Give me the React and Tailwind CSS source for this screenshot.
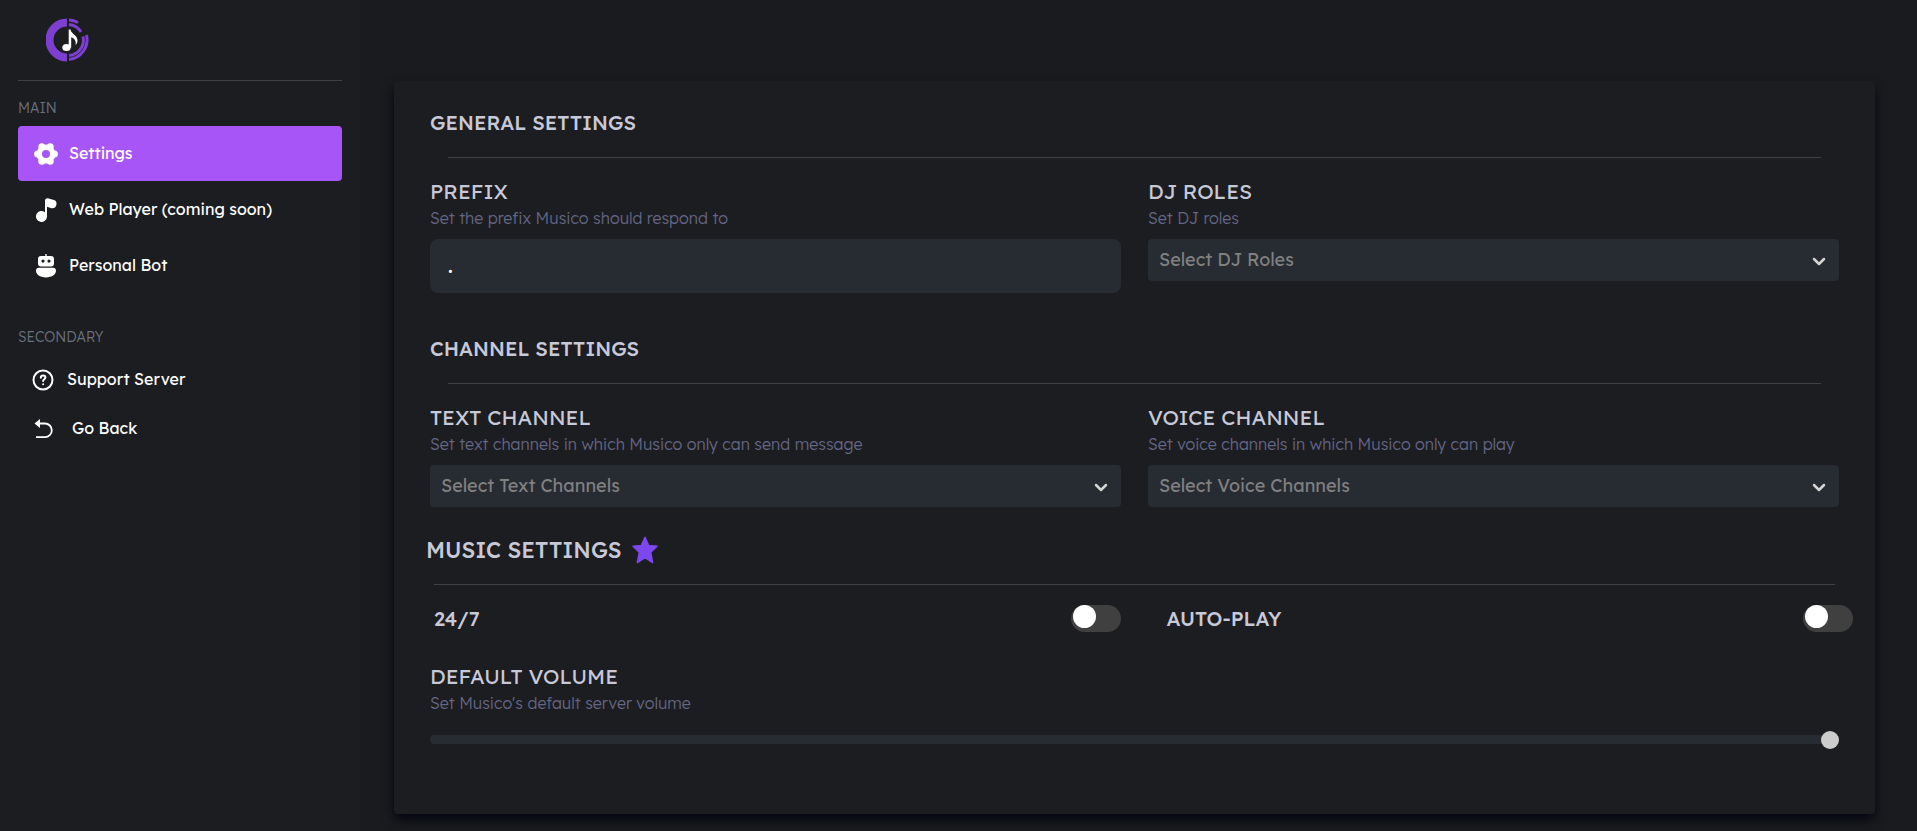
import { useState } from "react";

const heading = "text-[20px] leading-7 font-medium text-[#c8c9d8] uppercase";
const label = "text-[21px] leading-7 text-[#c8c9d8] uppercase";
const navHeading = "mb-2 text-[14px] leading-5 font-[350] text-[#6b7280]";

function Logo() {
  return (
    <svg width="44" height="44" viewBox="0 0 44 44" aria-label="Musico" role="img">
      <g fill="none" stroke="#7c3fd0">
        <path d="M21 4.500A17.500 17.500 0 0 0 21 39.500" strokeWidth="8" />
        <path d="M23 2A20 20 0 0 1 32 4.500M40.500 17A20 20 0 0 1 23 41.500" strokeWidth="3" />
        <path d="M23 6.500A15.500 15.500 0 0 1 35 14M37 18.500A15.500 15.500 0 0 1 23 37.500" strokeWidth="3" />
      </g>
      <ellipse cx="20.500" cy="29.500" rx="4.200" ry="3.600" fill="#fff" />
      <path d="M22.700 29.500V11.500h1.800c.5 4.500 7 5.500 7 11 0 2-.8 3.500-2 4.700 1.200-4.500-1.500-7-4.300-8v10.300z" fill="#fff" />
    </svg>
  );
}

function GearIcon() {
  return (
    <svg width="24" height="24" viewBox="0 0 24 24" fill="#fff" aria-hidden="true">
      <circle cx="12" cy="12" r="6.700" fill="none" stroke="#fff" strokeWidth="5.400" />
      <circle cx="20.400" cy="12" r="3.500" />
      <circle cx="3.600" cy="12" r="3.500" />
      <circle cx="16.200" cy="4.700" r="3.500" />
      <circle cx="7.800" cy="4.700" r="3.500" />
      <circle cx="16.200" cy="19.300" r="3.500" />
      <circle cx="7.800" cy="19.300" r="3.500" />
    </svg>
  );
}

function NoteIcon() {
  return (
    <svg width="24" height="24" viewBox="0 0 24 24" fill="#fff" aria-hidden="true">
      <path d="M11 2.500C11 .8 13 0 14.500.4L20 2c1.800.6 2.700 2 2.500 4-.1 3-2.500 4.800-5 4.200L13 8.800V18.500A5.500 5.500 0 1 1 11 14.200z" />
    </svg>
  );
}

function BotIcon() {
  return (
    <svg width="24" height="24" viewBox="0 0 24 24" fill="#fff" aria-hidden="true">
      <path fillRule="evenodd" d="M11.300 0h1.400v2H17a3 3 0 0 1 3 3v4.500a3 3 0 0 1-3 3H7a3 3 0 0 1-3-3V5a3 3 0 0 1 3-3h4.300zM9 5.500a1.600 1.600 0 1 0 0 3.200 1.600 1.600 0 0 0 0-3.200zm6 0a1.600 1.600 0 1 0 0 3.200 1.600 1.600 0 0 0 0-3.200z" />
      <path d="M5 13.700h14c1.800 0 3 1 3 2.900C22 20.500 18 23.500 12 23.500S2 20.500 2 16.600c0-1.900 1.200-2.900 3-2.900z" />
    </svg>
  );
}

function HelpIcon() {
  return (
    <svg width="22" height="22" viewBox="0 0 22 22" fill="none" stroke="#fff" strokeWidth="2" strokeLinecap="round" aria-hidden="true">
      <circle cx="11" cy="11" r="9.500" />
      <path d="M8.800 8.700c.1-1.300 1-2.200 2.300-2.200 1.400 0 2.300.9 2.300 2.100 0 1.600-2.300 1.700-2.300 3.500" />
      <path d="M11.100 15.200v.1" />
    </svg>
  );
}

function BackIcon() {
  return (
    <svg width="20" height="20" viewBox="0 0 20 20" aria-hidden="true">
      <path d="M6 4.500h5a6.800 6.800 0 0 1 0 13.600H2" fill="none" stroke="#fff" strokeWidth="1.800" />
      <path d="M.5 4.500L6 0v9z" fill="#fff" />
    </svg>
  );
}

function Chevron() {
  return (
    <svg className="pointer-events-none absolute top-1/2 right-3 -mt-2" width="16" height="18" viewBox="0 0 16 18" fill="none" stroke="#d4d4d4" strokeWidth="2.500" strokeLinecap="round" strokeLinejoin="round" aria-hidden="true">
      <path d="M3 7l5 5 5-5" />
    </svg>
  );
}

function NavLink({ icon, children, active }) {
  return (
    <a href="#" className={`flex h-[55px] items-center gap-[11px] rounded px-4 text-[16px] text-white ${active ? "bg-[#a855f7]" : ""}`}>
      {icon}
      <span className="pb-0.5">{children}</span>
    </a>
  );
}

function Heading({ children }) {
  return (
    <div className="flex flex-col gap-5">
      <h2 className={heading}>{children}</h2>
      <hr className="mx-[18px] border-[#404144]" />
    </div>
  );
}

function Field({ id, title, hint, children }) {
  return (
    <div className="min-w-0 flex-1">
      <label htmlFor={id} className={`block ${label}`}>{title}</label>
      <p className="mb-2 text-[16px] leading-[26px] font-[350] text-[#646685]">{hint}</p>
      {children}
    </div>
  );
}

function Select({ id, placeholder }) {
  return (
    <div className="relative">
      <select id={id} className="block h-[42px] w-full appearance-none rounded bg-[#272b32] px-[11px] pb-0.5 text-[18px] text-[#808080] outline-none">
        <option>{placeholder}</option>
      </select>
      <Chevron />
    </div>
  );
}

function Toggle({ id, title }) {
  const [on, setOn] = useState(false);
  return (
    <div className="flex flex-1 items-start justify-between">
      <label htmlFor={id} className={heading}>{title}</label>
      <input
        id={id}
        type="checkbox"
        role="switch"
        checked={on}
        onChange={(e) => setOn(e.target.checked)}
        className="h-[27px] w-[50px] appearance-none rounded-full bg-[#404040] px-0.5 before:block before:size-[23px] before:rounded-full before:bg-white checked:bg-[#a855f7] checked:before:ml-6"
      />
    </div>
  );
}

export default function App() {
  const [prefix, setPrefix] = useState(".");
  const [volume, setVolume] = useState(100);
  return (
    <div className="flex min-h-screen bg-[#1a1b1e] font-['Lexend','Inter',sans-serif]">
      <aside className="w-[360px] shrink-0 bg-[#1c1d20] px-[18px]">
        <div className="flex h-20 items-center pl-7">
          <Logo />
        </div>
        <hr className="border-[#404040]" />
        <nav className="pt-[17px]">
          <h3 className={navHeading}>MAIN</h3>
          <div className="flex flex-col gap-px">
            <NavLink active icon={<GearIcon />}>Settings</NavLink>
            <NavLink icon={<NoteIcon />}>Web Player (coming soon)</NavLink>
            <NavLink icon={<BotIcon />}>Personal Bot</NavLink>
          </div>
          <h3 className={`mt-[34px] ${navHeading}`}>SECONDARY</h3>
          <a href="#" className="flex h-[50px] items-center gap-[13px] px-3.5 text-[16px] text-white">
            <HelpIcon />
            <span className="pb-0.5">Support Server</span>
          </a>
          <a href="#" className="flex h-12 items-center gap-[18px] px-4 text-[16px] text-white">
            <BackIcon />
            <span className="pb-0.5">Go Back</span>
          </a>
        </nav>
      </aside>
      <main className="min-w-0 flex-1 pt-[81px] pr-[42px] pb-[17px] pl-[34px]">
        <section className="rounded bg-[#1c1d20] px-9 pt-7 pb-[70px] shadow-[0_6px_12px_-1px_#02030f]">
          <Heading>General Settings</Heading>
          <div className="mt-[19px] flex gap-[27px]">
            <Field id="prefix" title="Prefix" hint="Set the prefix Musico should respond to">
              <input id="prefix" value={prefix} onChange={(e) => setPrefix(e.target.value)} className="block h-[54px] w-full rounded-lg bg-[#272b32] px-[18px] pb-0.5 text-[20px] font-medium text-white outline-none" />
            </Field>
            <Field id="dj" title="DJ Roles" hint="Set DJ roles">
              <Select id="dj" placeholder="Select DJ Roles" />
            </Field>
          </div>
          <div className="mt-[42px]">
            <Heading>Channel Settings</Heading>
          </div>
          <div className="mt-[19px] flex gap-[27px]">
            <Field id="text" title="Text Channel" hint="Set text channels in which Musico only can send message">
              <Select id="text" placeholder="Select Text Channels" />
            </Field>
            <Field id="voice" title="Voice Channel" hint="Set voice channels in which Musico only can play">
              <Select id="voice" placeholder="Select Voice Channels" />
            </Field>
          </div>
          <div className="-mx-1 mt-[27px] flex items-center gap-[9px]">
            <h2 className="text-[22px] leading-8 font-medium text-[#c8c9d8]">MUSIC SETTINGS</h2>
            <svg width="28" height="28" viewBox="0 0 28 28" fill="#7c48ee" stroke="#7c48ee" strokeWidth="1.500" strokeLinejoin="round" aria-hidden="true">
              <path d="M14 1.200l3.600 8.200 8.400.9-6.300 6 1.900 10.200-7.600-4.800-7.600 4.800 1.900-10.200-6.300-6 8.400-.9z" />
            </svg>
          </div>
          <hr className="mx-1 mt-[18px] border-[#404144]" />
          <div className="-mr-3.5 ml-1 flex items-center gap-[46px] pt-5">
            <Toggle id="always" title="24/7" />
            <Toggle id="autoplay" title="Auto-Play" />
          </div>
          <div className="mt-[29px]">
            <Field id="volume" title="Default Volume" hint="Set Musico's default server volume">
              <input
                id="volume"
                type="range"
                min="0"
                max="100"
                value={volume}
                onChange={(e) => setVolume(Number(e.target.value))}
                className="mt-[19px] block h-[9px] w-full appearance-none rounded-full bg-[#272b32] [&::-webkit-slider-thumb]:size-[18px] [&::-webkit-slider-thumb]:appearance-none [&::-webkit-slider-thumb]:rounded-full [&::-webkit-slider-thumb]:bg-[#cccccc]"
              />
            </Field>
          </div>
        </section>
      </main>
    </div>
  );
}
